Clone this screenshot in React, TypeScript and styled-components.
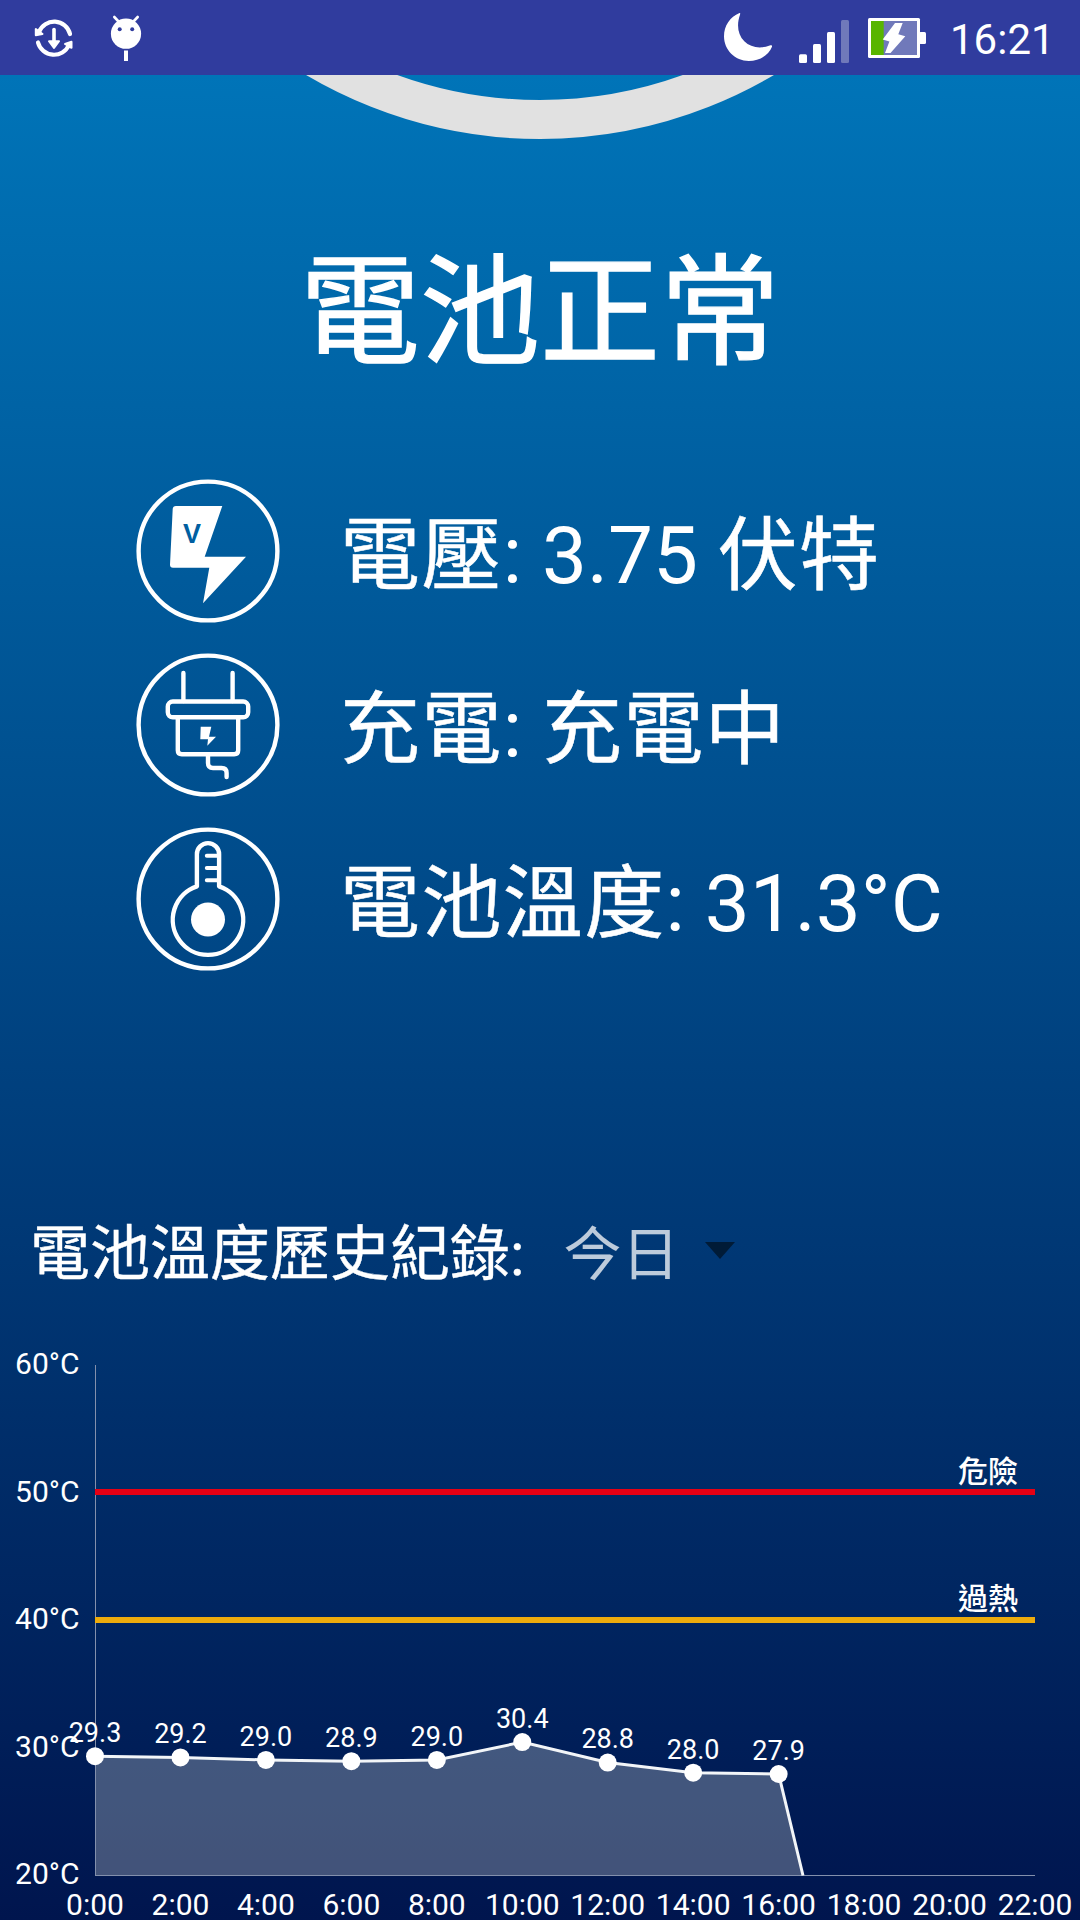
import React from "react";
import styled, { createGlobalStyle } from "styled-components";

const GlobalStyle = createGlobalStyle`
  * { box-sizing: border-box; }
  body { margin: 0; background: #001650; }
`;

const Screen = styled.div`
  display: flex;
  flex-direction: column;
  width: 1080px;
  height: 1920px;
  overflow: hidden;
  color: #fff;
  font-family: Roboto, "Noto Sans CJK TC", sans-serif;
`;

const StatusBar = styled.header`
  flex: none;
  display: flex;
  align-items: center;
  justify-content: space-between;
  height: 75px;
  padding: 0 25px 0 34px;
  background: #303c9e;
`;

const StatusGroup = styled.div<{ $gap: number }>`
  display: flex;
  align-items: center;
  gap: ${(p) => p.$gap}px;
`;

const StatusIcon = styled.svg`
  display: block;
  flex: none;
`;

const Clock = styled.span`
  width: 105px;
  margin-left: 24px;
  font-size: 42px;
  line-height: 50px;
  margin-top: 4px;
  white-space: nowrap;
`;

const Content = styled.main`
  flex: 1;
  display: flex;
  flex-direction: column;
  min-height: 0;
  background: linear-gradient(#0074b8, #00154e);
`;

const GaugeClip = styled.div`
  flex: none;
  display: flex;
  justify-content: center;
  align-items: flex-end;
  height: 64px;
  overflow: hidden;
`;

const Gauge = styled.div`
  flex: none;
  width: 918px;
  height: 918px;
  border: 39px solid #e1e1e1;
  border-radius: 50%;
`;

const Title = styled.h1`
  flex: none;
  margin: 103px 0 0;
  font-size: 120px;
  font-weight: 400;
  line-height: 144px;
  text-align: center;
  -webkit-text-stroke: 1.4px #fff;
`;

const Facts = styled.ul`
  flex: none;
  list-style: none;
  margin: 78px 0 0;
  padding: 0 0 0 136px;
`;

const Fact = styled.li`
  display: flex;
  align-items: center;
  gap: 60px;
  height: 174px;
`;

const FactText = styled.span`
  padding-top: 10px;
  font-size: 80px;
  line-height: 100px;
  white-space: nowrap;
`;

const Han = styled.span`
  letter-spacing: 1.4px;
  -webkit-text-stroke: 0.5px #fff;
`;

const FactIcon = styled.svg`
  display: block;
  flex: none;
  width: 144px;
  height: 144px;
  fill: none;
  stroke: #fff;
  stroke-width: 4.4;
  stroke-linecap: round;
  stroke-linejoin: round;
`;

const IconLetter = styled.text`
  font: 700 27px "Liberation Sans", sans-serif;
  fill: #005fa1;
  stroke: none;
  text-anchor: middle;
`;

const History = styled.div`
  flex: none;
  display: flex;
  align-items: center;
  height: 92px;
  margin-top: 223px;
  padding-left: 30px;
  font-size: 60px;
  line-height: 80px;
  white-space: nowrap;
`;

const HistoryLabel = styled.span`
  -webkit-text-stroke: 0.4px #fff;
`;

const RangePicker = styled.div`
  display: flex;
  align-items: center;
  gap: 25px;
  margin-left: 39px;
  font-size: 58px;
  color: rgba(255, 255, 255, 0.74);
`;

const Caret = styled.span`
  margin-bottom: 10px;
  border: 15px solid transparent;
  border-top: 17px solid #001b37;
  border-bottom: 0;
`;

const ChartSvg = styled.svg`
  display: block;
  flex: none;
  width: 1080px;
  height: 619px;
  margin-top: auto;
  fill: #fff;
`;

const ChartText = styled.text<{ $size: number; $weight?: number }>`
  font-family: Roboto, "Noto Sans CJK TC", sans-serif;
  font-size: ${(p) => p.$size}px;
  font-weight: ${(p) => p.$weight ?? 400};
  fill: #fff;
`;

const readings = [29.3, 29.2, 29.0, 28.9, 29.0, 30.4, 28.8, 28.0, 27.9];
const hours = Array.from({ length: 12 }, (_, i) => `${i * 2}:00`);
const ticks = [60, 50, 40, 30, 20];
const limits = [
  { value: 50, label: "危險", color: "#e60014" },
  { value: 40, label: "過熱", color: "#edab0c" },
];

const LEFT = 95;
const RIGHT = 1035;
const BASE = 573.8;
const xAt = (i: number) => LEFT + (i * (RIGHT - LEFT)) / 11;
const yAt = (v: number) => BASE - (v - 20) * 12.76;

function TemperatureChart() {
  const line = [
    ...readings.map((v, i) => `${xAt(i)},${yAt(v)}`),
    `803,${BASE + 0.7}`,
  ].join(" ");
  return (
    <ChartSvg viewBox="0 0 1080 619">
      {ticks.map((t) => (
        <ChartText key={t} $size={30} x={79.5} y={yAt(t) + 9.5} textAnchor="end">
          {t}°C
        </ChartText>
      ))}
      <polygon
        points={`${LEFT},${BASE + 0.7} ${line}`}
        fill="#fffff0"
        fillOpacity={0.26}
      />
      <rect x={95} y={64} width={1} height={511} fill="#8390ac" />
      <rect x={95} y={574} width={940} height={1} fill="#8390ac" />
      {limits.map((l) => (
        <g key={l.value}>
          <rect
            x={LEFT}
            y={Math.round(yAt(l.value) + 0.5) - 3}
            width={RIGHT - LEFT}
            height={6}
            fill={l.color}
          />
          <ChartText $size={30} $weight={500} x={1018} y={yAt(l.value) - 10.3} textAnchor="end">
            {l.label}
          </ChartText>
        </g>
      ))}
      <polyline points={line} fill="none" stroke="#f2f5f8" strokeWidth={3} />
      {readings.map((v, i) => (
        <g key={i}>
          <circle cx={xAt(i)} cy={yAt(v)} r={9} />
          <ChartText $size={27} x={xAt(i)} y={yAt(v) - 14.2} textAnchor="middle">
            {v.toFixed(1)}
          </ChartText>
        </g>
      ))}
      {hours.map((h, i) => (
        <ChartText key={h} $size={30} x={xAt(i)} y={614} textAnchor="middle">
          {h}
        </ChartText>
      ))}
    </ChartSvg>
  );
}

function SyncIcon() {
  return (
    <StatusIcon width={40} height={75} viewBox="34 0 40 75" fill="#fff">
      <g fill="none" stroke="#fff" strokeWidth={4.2} strokeLinecap="round">
        <path d="M39 32A16.3 16.3 0 0 1 70 34" />
        <path d="M38 42.5A16.5 16.5 0 0 0 69 45" />
        <path d="M54 29.5V42" strokeWidth={3.6} />
      </g>
      <path d="M35.8 29V35.2L42.5 34Z" stroke="#fff" strokeWidth={2} strokeLinejoin="round" />
      <path d="M71.5 41.8V47.8L65 44Z" stroke="#fff" strokeWidth={2} strokeLinejoin="round" />
      <path d="M49 41.2H59L54 48Z" stroke="#fff" strokeWidth={2} strokeLinejoin="round" />
    </StatusIcon>
  );
}

function RobotIcon() {
  return (
    <StatusIcon width={32} height={75} viewBox="110 0 32 75" fill="#fff">
      <circle cx={126} cy={33.7} r={15.1} />
      <path
        d="M114.3 17L119 22M137.7 17L133 22"
        stroke="#fff"
        strokeWidth={2.6}
        strokeLinecap="round"
      />
      <circle cx={119.7} cy={29.3} r={2} fill="#303c9e" />
      <circle cx={132.2} cy={29.3} r={2} fill="#303c9e" />
      <rect x={124} y={50.5} width={4} height={10.5} />
    </StatusIcon>
  );
}

function MoonIcon() {
  return (
    <StatusIcon width={50} height={75} viewBox="723 0 50 75" fill="#fff">
      <path d="M739.5 13C730 17 724 25.8 724 36.3C724 50 735 61 748.8 61C759.5 61 768.8 55 772 46.8C772.4 45.2 771.2 44.8 769.7 45.5C760.5 49 750.5 47.6 744.3 41.3C737.8 34.5 736.4 25 740 14.8C740.4 13.2 740.3 12.7 739.5 13Z" />
    </StatusIcon>
  );
}

function SignalIcon() {
  return (
    <StatusIcon width={50} height={75} viewBox="799 0 50 75" fill="#fff">
      <rect x={799} y={54.3} width={8} height={8.7} rx={1.5} />
      <rect x={813} y={44} width={8} height={19} rx={1.5} />
      <rect x={827} y={32} width={8} height={31} rx={1.5} />
      <rect x={841} y={20} width={8} height={43} rx={1.5} fill="#7079ba" />
    </StatusIcon>
  );
}

function BatteryIcon() {
  return (
    <StatusIcon width={58} height={75} viewBox="868 0 58 75" fill="#fff">
      <rect x={868} y={18} width={52} height={40} rx={1.5} />
      <rect x={919} y={32} width={7} height={12} rx={1.5} />
      <rect x={871} y={21} width={46} height={34} fill="#7079ba" />
      <rect x={871} y={21} width={12.7} height={34} fill="#58b500" />
      <path d="M895 23H902.7L898.3 34.3L905.3 36.2L890.5 53H885L889.4 41.6L882.7 39.4Z" />
    </StatusIcon>
  );
}

function VoltageIcon() {
  return (
    <FactIcon viewBox="0 0 144 144">
      <circle cx={72} cy={72} r={69.4} />
      <path
        d="M40 27H86.3L68.7 77.7H110L67 124.3L73.3 88.7H37Q34 88.7 34 85.7L36.7 30Q36.9 27 40 27Z"
        fill="#fff"
        stroke="none"
      />
      <IconLetter x={56} y={63.7}>V</IconLetter>
    </FactIcon>
  );
}

function PlugIcon() {
  return (
    <FactIcon viewBox="0 0 144 144">
      <circle cx={72} cy={72} r={69.4} />
      <path d="M47.4 20V48M96.6 20V48" />
      <rect x={31.8} y={48.5} width={80.4} height={15.8} rx={5} />
      <path d="M41.8 65V97.2Q41.8 101.2 45.8 101.2H98.2Q102.2 101.2 102.2 97.2V65" />
      <path d="M72 102V110Q72 115 77 115H85.5Q90.6 115 90.6 120V124" />
      <path
        d="M64.7 73.7H75.3L73 83.7H80L71.3 92.7L72 86.3H64.3Z"
        fill="#fff"
        stroke="none"
      />
    </FactIcon>
  );
}

function ThermometerIcon() {
  return (
    <FactIcon viewBox="0 0 144 144">
      <circle cx={72} cy={72} r={69.4} />
      <path d="M60.9 59.3V27.2A11.1 11.1 0 0 1 83.1 27.2V59.3A35.2 35.2 0 1 1 60.9 59.3Z" />
      <path d="M70.8 28.7H82M70.8 41H82M70.8 53.3H82" strokeWidth={4} />
      <circle cx={72} cy={92.5} r={17} fill="#fff" stroke="none" />
    </FactIcon>
  );
}

export default function App() {
  return (
    <Screen>
      <GlobalStyle />
      <StatusBar>
        <StatusGroup $gap={36}>
          <SyncIcon />
          <RobotIcon />
        </StatusGroup>
        <StatusGroup $gap={0}>
          <StatusGroup $gap={26}>
            <MoonIcon />
            <StatusGroup $gap={19}>
              <SignalIcon />
              <BatteryIcon />
            </StatusGroup>
          </StatusGroup>
          <Clock>16:21</Clock>
        </StatusGroup>
      </StatusBar>
      <Content>
        <GaugeClip>
          <Gauge />
        </GaugeClip>
        <Title>電池正常</Title>
        <Facts>
          <Fact>
            <VoltageIcon />
            <FactText>
              <Han>電壓</Han>: 3.75 <Han>伏特</Han>
            </FactText>
          </Fact>
          <Fact>
            <PlugIcon />
            <FactText>
              <Han>充電</Han>: <Han>充電中</Han>
            </FactText>
          </Fact>
          <Fact>
            <ThermometerIcon />
            <FactText>
              <Han>電池溫度</Han>: 31.3°C
            </FactText>
          </Fact>
        </Facts>
        <History>
          <HistoryLabel>電池溫度歷史紀錄:</HistoryLabel>
          <RangePicker>
            <span>今日</span>
            <Caret />
          </RangePicker>
        </History>
        <TemperatureChart />
      </Content>
    </Screen>
  );
}
